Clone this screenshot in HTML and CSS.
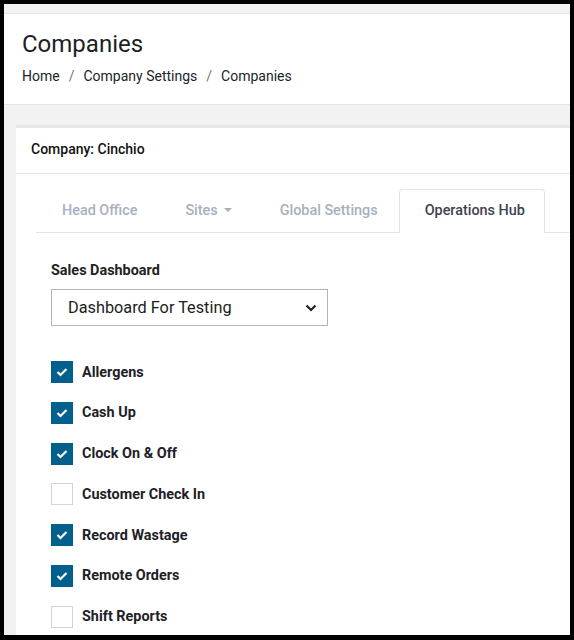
FILE: index.html
```html
<!DOCTYPE html>
<html>
<head>
<meta charset="utf-8">
<link rel="stylesheet" href="styles.css">
</head>
<body>
<div class="frame">
  <div class="topstrip"></div>
  <header class="page-header">
    <h1 class="title">Companies</h1>
    <nav class="crumbs">
      <span>Home</span><span class="sep">/</span><span>Company Settings</span><span class="sep">/</span><span>Companies</span>
    </nav>
  </header>
  <main class="content">
    <section class="card">
      <div class="card-head">Company: Cinchio</div>
      <div class="card-body">
        <div class="tabs">
          <div class="tab">Head Office</div>
          <div class="tab">Sites <span class="caret"></span></div>
          <div class="tab">Global Settings</div>
          <div class="tab active">Operations Hub</div>
        </div>
        <div class="pane">
          <label class="field-label">Sales Dashboard</label>
          <div class="select">
            <span>Dashboard For Testing</span>
            <svg class="chev" width="12" height="8" viewBox="0 0 12 8"><path d="M1.5 1.5 L6 6 L10.5 1.5" fill="none" stroke="#222" stroke-width="2.2"/></svg>
          </div>
          <ul class="checks">
            <li><span class="box on"><svg width="12" height="10" viewBox="0 0 12 10"><path d="M1.5 5 L4.5 8 L10.5 2" fill="none" stroke="#fff" stroke-width="2.2"/></svg></span>Allergens</li>
            <li><span class="box on"><svg width="12" height="10" viewBox="0 0 12 10"><path d="M1.5 5 L4.5 8 L10.5 2" fill="none" stroke="#fff" stroke-width="2.2"/></svg></span>Cash Up</li>
            <li><span class="box on"><svg width="12" height="10" viewBox="0 0 12 10"><path d="M1.5 5 L4.5 8 L10.5 2" fill="none" stroke="#fff" stroke-width="2.2"/></svg></span>Clock On &amp; Off</li>
            <li><span class="box"></span>Customer Check In</li>
            <li><span class="box on"><svg width="12" height="10" viewBox="0 0 12 10"><path d="M1.5 5 L4.5 8 L10.5 2" fill="none" stroke="#fff" stroke-width="2.2"/></svg></span>Record Wastage</li>
            <li><span class="box on"><svg width="12" height="10" viewBox="0 0 12 10"><path d="M1.5 5 L4.5 8 L10.5 2" fill="none" stroke="#fff" stroke-width="2.2"/></svg></span>Remote Orders</li>
            <li><span class="box"></span>Shift Reports</li>
          </ul>
        </div>
      </div>
    </section>
  </main>
</div>
</body>
</html>
```

FILE: styles.css
```css
* { box-sizing: border-box; }
html, body { margin: 0; padding: 0; }
body {
  background: #000;
  padding: 4px 4px 5px 4px;
  font-family: Roboto, "Liberation Sans", Arial, sans-serif;
  color: #212529;
}
.frame {
  height: 631px;
  background: #f2f2f2;
  overflow: hidden;
}
.topstrip {
  height: 10px;
  background: #f2f2f2;
  border-bottom: 1px solid #e4e4e4;
}
.page-header {
  background: #fff;
  height: 91px;
  border-bottom: 1px solid #e4e4e4;
  padding: 15px 18px 0 18px;
}
.title {
  margin: 0;
  font-size: 24px;
  font-weight: 400;
  line-height: 30px;
  color: #1c1f23;
}
.crumbs {
  margin-top: 8px;
  font-size: 14px;
  line-height: 18px;
  display: flex;
  gap: 9px;
  color: #212529;
}
.crumbs .sep { color: #6c757d; }
.content {
  padding: 20px 0 0 12px;
}
.card {
  background: #fff;
  border-top: 3px solid #e5e8eb;
  margin-right: -20px;
  height: 560px;
}
.card-head {
  height: 46px;
  border-bottom: 1px solid #e4e4e4;
  padding: 0 15px 4px 15px;
  display: flex;
  align-items: center;
  font-size: 14px;
  font-weight: 500;
  color: #111;
}
.card-body {
  padding: 15px 0 0 20px;
}
.tabs {
  display: flex;
  border-bottom: 1px solid #e2e4e8;
  height: 44px;
}
.tab {
  display: flex;
  align-items: center;
  padding: 0 22px 0 26px;
  font-size: 14.4px;
  font-weight: 500;
  color: #a8b0bf;
  gap: 6px;
}
.tab:nth-child(3) { padding-right: 21px; }
.caret {
  width: 0; height: 0;
  border-left: 4.5px solid transparent;
  border-right: 4.5px solid transparent;
  border-top: 4.5px solid #a8b0bf;
  margin-top: -1px;
}
.tab.active {
  color: #3d4350;
  background: #fff;
  border: 1px solid #e2e4e8;
  border-bottom-color: #fff;
  border-radius: 4px 4px 0 0;
  margin-bottom: -1px;
  padding: 0 19px 2px 25px;
}
.pane {
  padding: 29px 0 0 15px;
}
.field-label {
  display: block;
  font-size: 14.4px;
  font-weight: 700;
  line-height: 18px;
  color: #222;
}
.select {
  margin-top: 9px;
  width: 277px;
  height: 37px;
  border: 1px solid #b4b4b4;
  display: flex;
  align-items: center;
  justify-content: space-between;
  padding: 0 10px 0 16px;
  font-size: 16.3px;
  color: #1a1d21;
}
.chev { display: block; }
.checks {
  list-style: none;
  margin: 35px 0 0 0;
  padding: 0;
  display: flex;
  flex-direction: column;
  gap: 18.8px;
}
.checks li {
  display: flex;
  align-items: center;
  gap: 9px;
  height: 22px;
  font-size: 14.4px;
  font-weight: 700;
  color: #1e2126;
}
.box {
  width: 22px;
  height: 22px;
  border: 1px solid #d4d4d4;
  background: #fff;
  display: flex;
  align-items: center;
  justify-content: center;
}
.box.on {
  background: #01608c;
  border-color: #01608c;
}
```
